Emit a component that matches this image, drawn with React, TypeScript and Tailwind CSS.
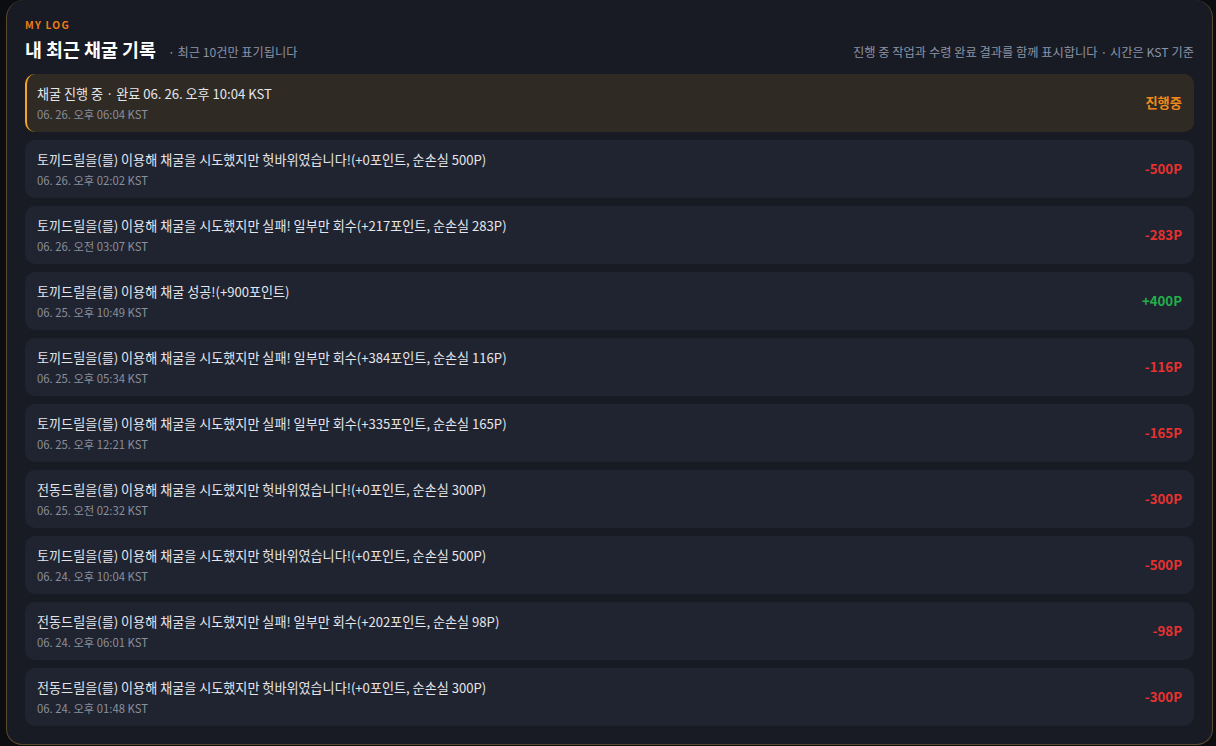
const font = '"Noto Sans CJK KR", sans-serif';

type Entry = {
  text: string;
  time: string;
  amount: string;
  kind: 'pending' | 'loss' | 'gain';
};

const entries: Entry[] = [
  { text: '채굴 진행 중 · 완료 06. 26. 오후 10:04 KST', time: '06. 26. 오후 06:04 KST', amount: '진행중', kind: 'pending' },
  { text: '토끼드릴을(를) 이용해 채굴을 시도했지만 헛바위였습니다!(+0포인트, 순손실 500P)', time: '06. 26. 오후 02:02 KST', amount: '-500P', kind: 'loss' },
  { text: '토끼드릴을(를) 이용해 채굴을 시도했지만 실패! 일부만 회수(+217포인트, 순손실 283P)', time: '06. 26. 오전 03:07 KST', amount: '-283P', kind: 'loss' },
  { text: '토끼드릴을(를) 이용해 채굴 성공!(+900포인트)', time: '06. 25. 오후 10:49 KST', amount: '+400P', kind: 'gain' },
  { text: '토끼드릴을(를) 이용해 채굴을 시도했지만 실패! 일부만 회수(+384포인트, 순손실 116P)', time: '06. 25. 오후 05:34 KST', amount: '-116P', kind: 'loss' },
  { text: '토끼드릴을(를) 이용해 채굴을 시도했지만 실패! 일부만 회수(+335포인트, 순손실 165P)', time: '06. 25. 오후 12:21 KST', amount: '-165P', kind: 'loss' },
  { text: '전동드릴을(를) 이용해 채굴을 시도했지만 헛바위였습니다!(+0포인트, 순손실 300P)', time: '06. 25. 오전 02:32 KST', amount: '-300P', kind: 'loss' },
  { text: '토끼드릴을(를) 이용해 채굴을 시도했지만 헛바위였습니다!(+0포인트, 순손실 500P)', time: '06. 24. 오후 10:04 KST', amount: '-500P', kind: 'loss' },
  { text: '전동드릴을(를) 이용해 채굴을 시도했지만 실패! 일부만 회수(+202포인트, 순손실 98P)', time: '06. 24. 오후 06:01 KST', amount: '-98P', kind: 'loss' },
  { text: '전동드릴을(를) 이용해 채굴을 시도했지만 헛바위였습니다!(+0포인트, 순손실 300P)', time: '06. 24. 오후 01:48 KST', amount: '-300P', kind: 'loss' },
];

function LogRow({ entry }: { entry: Entry }) {
  const pending = entry.kind === 'pending';
  const amountColor =
    entry.kind === 'pending' ? 'text-[#f0881a]' : entry.kind === 'gain' ? 'text-[#22b04b]' : 'text-[#e8322f]';

  return (
    <div
      className={`flex h-[58px] items-center justify-between rounded-[10px] pr-3 ${
        pending ? 'border-l-2 border-[#f5a524] bg-[#2f2a24] pl-[10px]' : 'bg-[#202430] pl-3'
      }`}
    >
      <div className="flex flex-col">
        <div className="text-[13.1px] leading-[20px] text-[#e4e6ec]">{entry.text}</div>
        <div className="mt-[2px] text-[11.3px] leading-[16px] text-[#8a8f9c]">{entry.time}</div>
      </div>
      <div className={`text-[13.25px] font-bold ${amountColor}`}>{entry.amount}</div>
    </div>
  );
}

export default function App() {
  return (
    <div className="h-[746px] w-[1216px] bg-[#0c0d11] pl-[6px] pr-[3px]" style={{ fontFamily: font }}>
      <div className="flex h-[745px] flex-col rounded-b-[16px] rounded-t-[18px] border border-t-0 border-[#5b4a2c] bg-[#181b23] px-[18px] pt-[18px]">
        <div className="text-[10.2px] font-bold leading-[14px] tracking-[0.12em] text-[#ef7d16]">MY LOG</div>
        <div className="mt-[4px] flex items-end justify-between">
          <div className="flex items-baseline gap-3">
            <h1 className="text-[18.4px] font-bold leading-[26px] text-white">내 최근 채굴 기록</h1>
            <span className="text-[12.2px] text-[#8a93a6]">· 최근 10건만 표기됩니다</span>
          </div>
          <div className="pb-[1px] text-[12.25px] text-[#8a93a6]">진행 중 작업과 수령 완료 결과를 함께 표시합니다 · 시간은 KST 기준</div>
        </div>
        <div className="mt-[12px] flex flex-col gap-2">
          {entries.map((e, i) => (
            <LogRow key={i} entry={e} />
          ))}
        </div>
      </div>
    </div>
  );
}
